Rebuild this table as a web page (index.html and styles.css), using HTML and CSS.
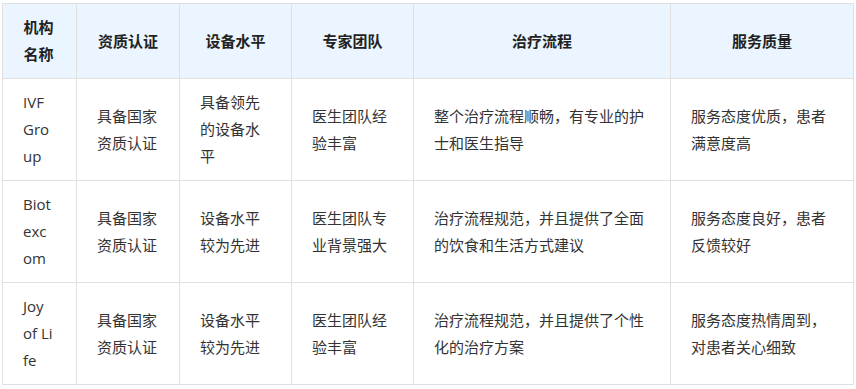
FILE: index.html
```html
<!DOCTYPE html>
<html lang="zh-CN">
<head>
<meta charset="utf-8">
<link rel="stylesheet" href="styles.css">
</head>
<body>
<table class="grid">
  <colgroup>
    <col class="c1"><col class="c2"><col class="c3"><col class="c4"><col class="c5"><col class="c6">
  </colgroup>
  <thead>
    <tr>
      <th class="name">机构名称</th>
      <th>资质认证</th>
      <th>设备水平</th>
      <th>专家团队</th>
      <th>治疗流程</th>
      <th>服务质量</th>
    </tr>
  </thead>
  <tbody>
    <tr>
      <td class="name">IVF Group</td>
      <td>具备国家资质认证</td>
      <td>具备领先的设备水平</td>
      <td>医生团队经验丰富</td>
      <td>整个治疗流程顺畅，有专业的护士和医生指导</td>
      <td>服务态度优质，患者满意度高</td>
    </tr>
    <tr>
      <td class="name">Biotexcom</td>
      <td>具备国家资质认证</td>
      <td>设备水平较为先进</td>
      <td>医生团队专业背景强大</td>
      <td>治疗流程规范，并且提供了全面的饮食和生活方式建议</td>
      <td>服务态度良好，患者反馈较好</td>
    </tr>
    <tr>
      <td class="name">Joy of Life</td>
      <td>具备国家资质认证</td>
      <td>设备水平较为先进</td>
      <td>医生团队经验丰富</td>
      <td>治疗流程规范，并且提供了个性化的治疗方案</td>
      <td>服务态度热情周到，对患者关心细致</td>
    </tr>
  </tbody>
</table>
</body>
</html>
```

FILE: styles.css
```css
html, body {
  margin: 0;
  padding: 0;
  background: #ffffff;
}
body {
  padding: 3px 0 0 2px;
  font-family: "Open Sans", "Noto Sans CJK SC", sans-serif;
  font-size: 15px;
  color: #333333;
}
.grid {
  border-collapse: collapse;
  table-layout: fixed;
  width: 851px;
}
.c1 { width: 74px; }
.c2 { width: 103px; }
.c3 { width: 112px; }
.c4 { width: 122px; }
.c5 { width: 257px; }
.c6 { width: 183px; }
.grid th,
.grid td {
  border: 1px solid #e0e0e0;
  padding: 10px 20px;
  line-height: 27px;
  vertical-align: middle;
  word-break: break-all;
}
.grid .name {
  padding-right: 22px;
}
.grid th {
  background: #eaf5ff;
  font-weight: bold;
  text-align: center;
  color: #222222;
  height: 54px;
}
.grid td {
  text-align: left;
  height: 81px;
}
```
